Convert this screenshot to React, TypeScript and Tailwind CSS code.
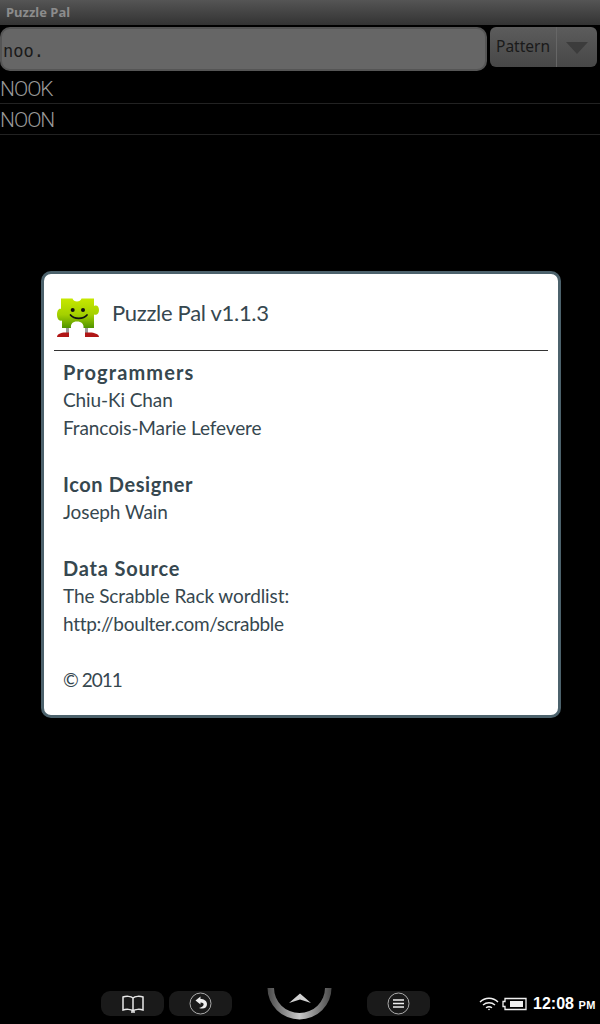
import React from "react";

const body = "font-['Lato',sans-serif]";

function PuzzleIcon() {
  return (
    <svg width="44" height="44" viewBox="0 0 44 44" className="shrink-0">
      <defs>
        <linearGradient id="pz" x1="0" y1="0" x2="0" y2="1">
          <stop offset="0" stopColor="#c6e800" />
          <stop offset="0.55" stopColor="#a4d000" />
          <stop offset="1" stopColor="#4f9400" />
        </linearGradient>
      </defs>
      <rect x="10" y="33" width="3" height="8" fill="#9a9a9a" />
      <rect x="29" y="33" width="3" height="8" fill="#9a9a9a" />
      <path d="M1 44c0-3 4-4.500 8-4.500h4V44z" fill="#b01616" />
      <path d="M29 44v-4.500h5c4 0 9 1.500 9 4.500z" fill="#b01616" />
      <path
        d="M5 5.500h11.500c.5 2 2.500 3 4.500 3s4-1 4.500-3H38V13c3-1.500 5 .5 5 4s-2 5.500-5 4.500V35H27.500c.5-4-2-6.500-6.500-6.500s-6.500 2.500-6 6.500H6v-7.500c-3 1-5-2-5-6s2-6.500 4-5.500z"
        fill="url(#pz)"
      />
      <circle cx="16.700" cy="17" r="2" fill="#111" />
      <circle cx="27" cy="17" r="2" fill="#111" />
      <path d="M14.500 22c3.500 4.500 13 4.500 16.500 0" fill="none" stroke="#111" strokeWidth="1.700" strokeLinecap="round" />
    </svg>
  );
}

function Bar({ children }: { children: React.ReactNode }) {
  return <div className="flex h-[25px] w-[63px] items-center justify-center rounded-[9px] bg-[#1a1a1a]">{children}</div>;
}

export default function App() {
  return (
    <div className="relative flex h-[1024px] w-[600px] flex-col overflow-hidden bg-black">
      <div className="flex h-[25px] shrink-0 items-center bg-gradient-to-b from-[#555555] to-[#333333] pl-[6px] font-['Noto_Sans',sans-serif] text-[13px] font-bold text-[#8c8c8c]">
        Puzzle Pal
      </div>
      <div className="mt-[2px] flex h-[45px] shrink-0 items-start">
        <div className="flex h-[44px] w-[487px] items-center rounded-[10px] border-2 border-[#555555] bg-[#666666] pl-[1px] pt-[6px] font-['DejaVu_Sans_Mono',monospace] text-[17px] text-[#1a1a1a]">
          noo.
        </div>
        <div className="ml-[3px] flex h-[40px] w-[107px] items-center rounded-[6px] bg-gradient-to-b from-[#5c5c5c] to-[#474747] font-['Noto_Sans',sans-serif] text-[15.500px] text-[#1a1a1a]">
          <div className="flex h-full w-[67px] items-center justify-center border-r border-[#666666]">Pattern</div>
          <div className="flex flex-1 items-center justify-center pt-[2px]">
            <svg width="24" height="14" viewBox="0 0 24 14">
              <path d="M1 1h22L12 13z" fill="#3c3c3c" />
            </svg>
          </div>
        </div>
      </div>
      <div className="flex h-[32px] shrink-0 items-center border-b border-[#222222] pt-[4px] font-['Roboto',sans-serif] text-[21px] font-light tracking-[-1px] text-[#999999]">NOOK</div>
      <div className="flex h-[31px] shrink-0 items-center border-b border-[#222222] pt-[4px] font-['Roboto',sans-serif] text-[21px] font-light tracking-[-1px] text-[#999999]">NOON</div>

      <div className="mt-auto flex h-[40px] shrink-0 items-start">
        <div className="ml-[101px] mt-[7px] flex gap-[5px]">
          <Bar>
            <svg width="24" height="20" viewBox="0 0 24 20" fill="none" stroke="#e8e8e8" strokeWidth="1.500">
              <path d="M12 4C10 2 5 2 2 3v13c3-1 8-1 10 1 2-2 7-2 10-1V3c-3-1-8-1-10 1zM12 4v13" />
              <path d="M10 18h4" />
            </svg>
          </Bar>
          <Bar>
            <svg width="23" height="23" viewBox="0 0 23 23">
              <circle cx="11.500" cy="11.500" r="10.500" fill="none" stroke="#aaaaaa" strokeWidth="1" />
              <path d="M11.500 4.500L6.500 8.500l5 4V10.500c2.500 0 3.500 1 3 2.500-.4 1.300-2 2.500-4.500 3 4.500 1.500 8 0 8-4 0-3-3-5-6.500-5z" fill="#eeeeee" />
            </svg>
          </Bar>
        </div>
        <div className="ml-[35px] mt-[4px] w-[65px]">
          <svg width="65" height="32" viewBox="0 0 65 32">
            <defs>
              <linearGradient id="arc" x1="0" y1="0" x2="1" y2="0">
                <stop offset="0" stopColor="#484848" />
                <stop offset="0.5" stopColor="#c8c8c8" />
                <stop offset="1" stopColor="#484848" />
              </linearGradient>
            </defs>
            <path d="M0.500 0a32 31.500 0 0 0 64 0h-6.500a25.500 25 0 0 1-51 0z" fill="url(#arc)" />
            <path d="M22 15L33 5.500 44 15 33 11.500z" fill="#d0d0d0" />
          </svg>
        </div>
        <div className="ml-[35px] mt-[7px]">
          <Bar>
            <svg width="23" height="23" viewBox="0 0 23 23">
              <circle cx="11.500" cy="11.500" r="10.500" fill="none" stroke="#aaaaaa" strokeWidth="1" />
              <path d="M6 8h11M6 11.500h11M6 15h11" stroke="#eeeeee" strokeWidth="1.300" />
            </svg>
          </Bar>
        </div>
        <div className="ml-[49px] mt-[7px] flex h-[25px] items-center">
          <svg width="20" height="14" viewBox="0 0 20 14" fill="none" stroke="#f0f0f0" strokeWidth="1.400">
            <path d="M1 5c5-5 13-5 18 0M4 8c3.500-3 8.500-3 12 0M7 10.800c2-1.400 4-1.400 6 0" />
            <circle cx="10" cy="12.500" r="0.800" fill="#f0f0f0" stroke="none" />
          </svg>
          <svg width="25" height="14" viewBox="0 0 25 14" className="ml-[3px]">
            <path d="M3 1.500h21v11H3V9.500H1v-5h2z" fill="none" stroke="#f0f0f0" strokeWidth="1.300" />
            <rect x="8" y="4" width="13" height="6" fill="#f0f0f0" />
          </svg>
          <span className="ml-[6px] whitespace-nowrap font-['Liberation_Sans',sans-serif] text-[16px] font-bold text-white">
            12:08 <span className="text-[11px] tracking-[0.5px]">PM</span>
          </span>
        </div>
      </div>

      <div className={`absolute left-[41px] top-[271px] h-[447px] w-[520px] rounded-[10px] border-[3px] border-[#4c626c] bg-white ${body} text-[#36474f]`}>
        <div className="mx-[10px] flex h-[77px] items-center gap-[12px] border-b border-[#333333] pl-[2px] pt-[6px]">
          <PuzzleIcon />
          <span className="mb-[4px] text-[22px] font-normal leading-none tracking-[-0.3px]">Puzzle Pal v1.1.3</span>
        </div>
        <div className="px-[19px] pt-[7px] text-[19px] leading-[28px] tracking-[-0.1px]">
          <div className="text-[20px] font-bold tracking-[1.1px]">Programmers</div>
          <div>Chiu-Ki Chan</div>
          <div>Francois-Marie Lefevere</div>
          <div className="mt-[28px] text-[20px] font-bold tracking-[0.6px]">Icon Designer</div>
          <div>Joseph Wain</div>
          <div className="mt-[28px] text-[20px] font-bold tracking-[0.8px]">Data Source</div>
          <div>The Scrabble Rack wordlist:</div>
          <div className="tracking-[-0.3px]">http://boulter.com/scrabble</div>
          <div className="mt-[28px] tracking-[-1px]">© 2011</div>
        </div>
      </div>
    </div>
  );
}
